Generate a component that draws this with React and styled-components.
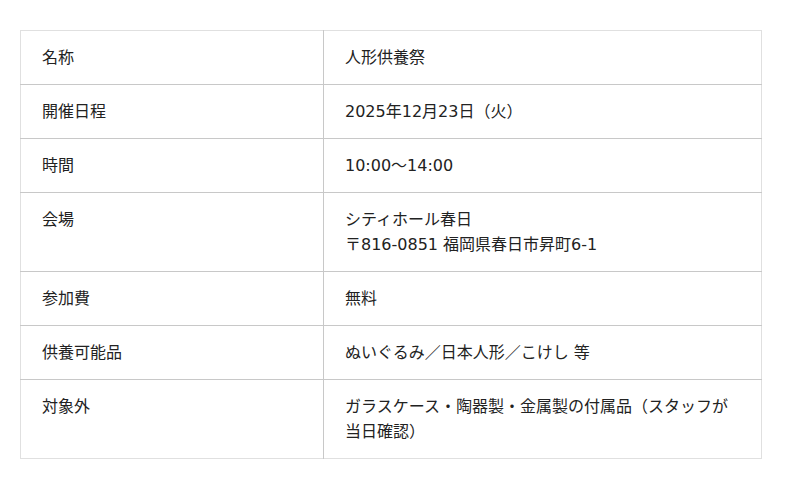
import React from 'react'
import styled, { createGlobalStyle } from 'styled-components'

const GlobalStyle = createGlobalStyle`
	body {
		margin: 0;
		background: #fff;
		font-family: "DejaVu Sans", "Noto Sans CJK JP", sans-serif;
		color: #222;
	}
`

const Wrap = styled.main`
	padding: 30px 38px 30px 20px;
`

const Table = styled.table`
	width: 742px;
	border-collapse: collapse;
	border: 1px solid #e0e0e0;
	font-family: "DejaVu Sans", "Noto Sans CJK JP", sans-serif;
	font-size: 16px;
	line-height: 25px;
	color: #222;
`

const Row = styled.tr`
	border-bottom: 1px solid #c8c8c8;
	&:last-child {
		border-bottom: 1px solid #e0e0e0;
	}
`

const Label = styled.th`
	box-sizing: border-box;
	width: 303px;
	padding: 14px 21px;
	text-align: left;
	font-weight: normal;
	vertical-align: top;
	border-right: 1px solid #c8c8c8;
`

const Value = styled.td`
	padding: 14px 21px;
	vertical-align: top;
`

const rows = [
	['名称', '人形供養祭'],
	['開催日程', '2025年12月23日（火）'],
	['時間', '10:00〜14:00'],
	['会場', <>シティホール春日<br />〒816-0851 福岡県春日市昇町6-1</>],
	['参加費', '無料'],
	['供養可能品', 'ぬいぐるみ／日本人形／こけし 等'],
	['対象外', 'ガラスケース・陶器製・金属製の付属品（スタッフが当日確認）'],
]

const App = () => {
	return (
		<>
		<GlobalStyle />
		<Wrap>
			<Table>
				<tbody>
					{rows.map(([label, value]) => (
						<Row key={label}>
							<Label>{label}</Label>
							<Value>{value}</Value>
						</Row>
					))}
				</tbody>
			</Table>
		</Wrap>
		</>
	)
}

export default App
